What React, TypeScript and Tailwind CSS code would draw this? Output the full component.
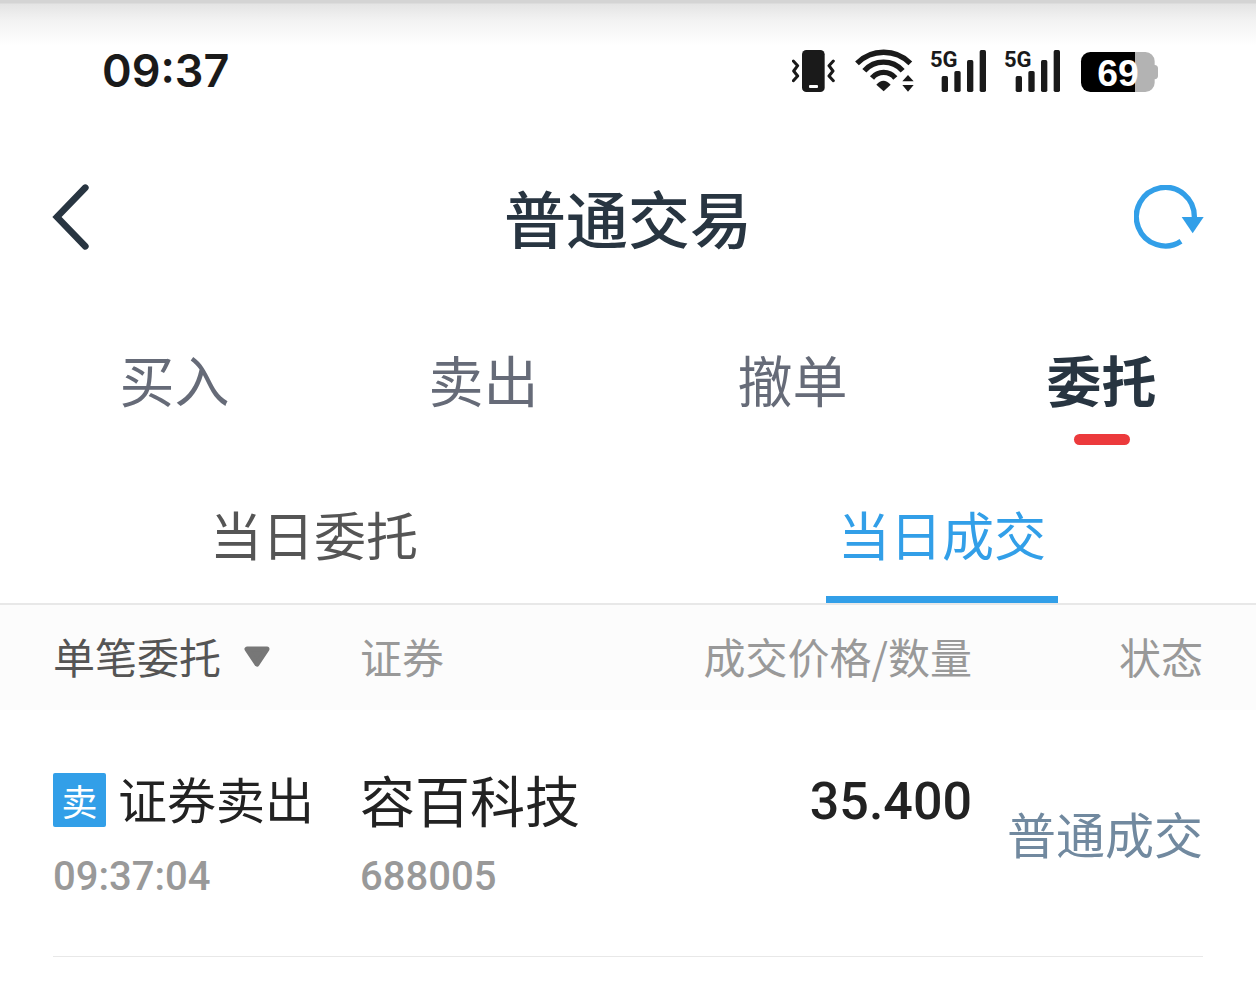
import { useState } from 'react';
import clsx from 'clsx';

const tabs = ['买入', '卖出', '撤单', '委托'];
const subTabs = ['当日委托', '当日成交'];

const deals = [
  {
    side: '卖',
    action: '证券卖出',
    time: '09:37:04',
    name: '容百科技',
    code: '688005',
    price: '35.400',
    status: '普通成交',
  },
];

const VibrateIcon = () => (
  <svg className="h-[46px] w-[46px]" viewBox="36 36 138 138" fill="none">
    <rect x="66" y="42" width="68" height="126" rx="13" fill="#1a1a1a" />
    <rect x="87" y="147" width="27" height="9" rx="3" fill="#fff" />
    <path
      d="M40 75l13 14-12 16 12 15-13 14M160 75l-13 14 12 16-12 15 13 14"
      stroke="#1a1a1a"
      strokeWidth="9"
      strokeLinecap="round"
      strokeLinejoin="round"
    />
  </svg>
);

const WifiIcon = () => (
  <svg className="h-[46px] w-[60px]" viewBox="222 36 180 138" fill="none">
    <path
      d="M231 82A113 113 0 0 1 391 82M253 104A77 77 0 0 1 368 104M276 126A45 45 0 0 1 346 126"
      stroke="#1a1a1a"
      strokeWidth="16"
    />
    <path d="M289 146Q310 122 332 146L311 166Z" fill="#1a1a1a" />
    <path d="M384 117L401 136H367ZM367 147H401L384 167Z" fill="#1a1a1a" />
  </svg>
);

const SignalIcon = () => (
  <svg className="h-[46px] w-[58px] overflow-visible" viewBox="450 36 174 138" fill="#1a1a1a">
    <text x="450" y="92" fontSize="66" fontWeight="700" fontFamily="Roboto, sans-serif">
      5G
    </text>
    <rect x="485" y="120" width="19" height="48" rx="5" />
    <rect x="523" y="105" width="19" height="63" rx="5" />
    <rect x="561" y="72" width="19" height="96" rx="5" />
    <rect x="599" y="42" width="19" height="126" rx="5" />
  </svg>
);

const BatteryIcon = () => (
  <svg className="h-[46px] w-[82px]" viewBox="264 36 246 138">
    <path
      d="M435 48H466A28 28 0 0 1 494 76V87Q504 88 504 97V120Q504 129 494 130V140A28 28 0 0 1 466 168H435Z"
      fill="#b3b3b3"
    />
    <path d="M435 48H301A28 28 0 0 0 273 76V140A28 28 0 0 0 301 168H435Z" fill="#000" />
    <text
      x="384"
      y="149"
      fontSize="112"
      fontWeight="700"
      fill="#fff"
      textAnchor="middle"
      fontFamily="'Liberation Sans', sans-serif"
    >
      69
    </text>
  </svg>
);

const StatusBar = () => (
  <div className="flex h-[142px] items-center justify-between bg-[linear-gradient(#d4d4d4_3px,#e4e4e4_4px,#f2f2f2_20px,#fff_46px)] pr-24 pl-[102px]">
    <span className="font-['Inter',sans-serif] text-[45px] font-semibold text-[#1a1a1a]">
      09:37
    </span>
    <div className="flex items-center gap-4">
      <VibrateIcon />
      <WifiIcon />
      <SignalIcon />
      <SignalIcon />
      <BatteryIcon />
    </div>
  </div>
);

const App = () => {
  const [tab, setTab] = useState('委托');
  const [subTab, setSubTab] = useState('当日成交');

  return (
    <div className="min-h-screen bg-white font-['Noto_Sans_CJK_SC',sans-serif]">
      <StatusBar />

      <header className="flex h-[150px] items-center justify-between px-[52px]">
        <button aria-label="返回" className="flex w-[72px]">
          <svg className="h-[70px] w-10" viewBox="67 548 120 210" fill="none">
            <path
              d="M167 565L82 653L167 741"
              stroke="#283541"
              strokeWidth="20"
              strokeLinecap="round"
            />
          </svg>
        </button>
        <h1 className="text-[62px] leading-[80px] font-medium text-[#283541]">普通交易</h1>
        <button aria-label="刷新" className="flex w-[72px] justify-end">
          <svg className="h-16 w-[70px]" viewBox="69 45 210 192" fill="none">
            <path d="M250 141A87 88 0 1 0 210 214" stroke="#329fe8" strokeWidth="16" />
            <path d="M212 141H278L245 190Z" fill="#329fe8" />
          </svg>
        </button>
      </header>

      <nav className="grid h-[176px] grid-cols-4 pl-5">
        {tabs.map((name) => (
          <button
            key={name}
            onClick={() => setTab(name)}
            className={clsx(
              'relative pb-1 text-[55px] leading-[80px]',
              tab === name ? 'font-bold text-[#283541]' : 'text-[#666b78]'
            )}
          >
            {name}
            {tab === name && (
              <span className="absolute bottom-[23px] left-1/2 h-[11px] w-14 -translate-x-1/2 rounded-full bg-[#ec3a3c]" />
            )}
          </button>
        ))}
      </nav>

      <div className="grid h-[137px] grid-cols-2 border-b-2 border-[#e8e8e8]">
        {subTabs.map((name) => (
          <button
            key={name}
            onClick={() => setSubTab(name)}
            className={clsx(
              'relative pb-1 text-[52px] leading-[80px]',
              subTab === name ? 'text-[#329fe8]' : 'text-[#555555]'
            )}
          >
            {name}
            {subTab === name && (
              <span className="absolute bottom-0 left-1/2 h-[7px] w-[232px] -translate-x-1/2 bg-[#329fe8]" />
            )}
          </button>
        ))}
      </div>

      <table className="w-full table-fixed">
        <thead className="bg-[#fcfcfc] text-[42px] leading-[60px] text-[#999999]">
          <tr className="h-[105px]">
            <th className="w-[360px] pb-1 pl-[53px] text-left font-normal">
              <div className="relative w-[218px]">
                <select
                  aria-label="委托类型"
                  className="block h-[60px] w-full appearance-none bg-transparent text-[#555555]"
                >
                  <option>单笔委托</option>
                </select>
                <svg
                  className="pointer-events-none absolute top-5 right-0 h-[22px] w-7"
                  viewBox="0 0 28 22"
                >
                  <path
                    d="M4 3H24L14 18Z"
                    fill="#777"
                    stroke="#777"
                    strokeWidth="5"
                    strokeLinejoin="round"
                  />
                </svg>
              </div>
            </th>
            <th className="pb-1 text-left font-normal">证券</th>
            <th className="w-[300px] pb-1 text-right font-normal">成交价格/数量</th>
            <th className="w-[284px] pr-[53px] pb-1 text-right font-normal">状态</th>
          </tr>
        </thead>
        <tbody>
          {deals.map((deal) => (
            <tr key={deal.code} className="align-top leading-[60px] text-[#222222]">
              <td className="pt-[58px] pb-[50px] pl-[53px]">
                <div className="flex h-[60px] items-center gap-3 text-[49px]">
                  <span className="mt-1 flex h-[54px] w-[53px] items-center justify-center rounded-xs bg-[#329fe8] text-4xl text-white">
                    {deal.side}
                  </span>
                  {deal.action}
                </div>
                <div className="mt-5 font-['Roboto',sans-serif] text-[40px] leading-[58px] font-medium text-[#999999]">
                  {deal.time}
                </div>
              </td>
              <td className="pt-[58px] pb-[50px]">
                <div className="h-[60px] text-[55px]">{deal.name}</div>
                <div className="mt-5 font-['Roboto',sans-serif] text-[40px] leading-[58px] font-medium text-[#999999]">
                  {deal.code}
                </div>
              </td>
              <td className="pt-[62px] pb-[50px] text-right font-['Roboto',sans-serif] text-[52px] font-medium">
                {deal.price}
              </td>
              <td className="pt-[50px] pr-[53px] pb-[50px] text-right align-middle text-[49px] text-[#71899f]">
                {deal.status}
              </td>
            </tr>
          ))}
        </tbody>
      </table>
      <hr className="mx-[53px] border-[#e8e8e8]" />
    </div>
  );
};

export default App;
